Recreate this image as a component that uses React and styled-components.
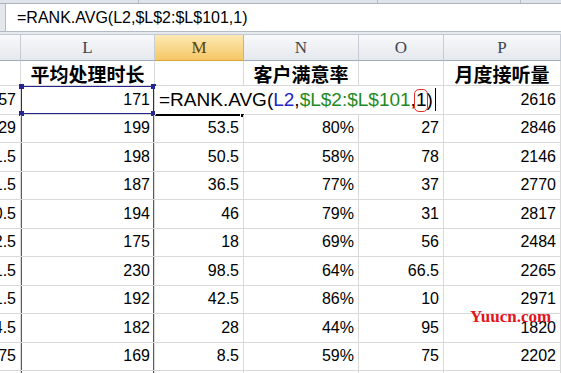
import React from 'react';
import styled, { createGlobalStyle, css } from 'styled-components';

const GlobalStyle = createGlobalStyle`
  html, body {
    margin: 0;
    padding: 0;
    background: #fff;
  }
  body {
    font-family: "Liberation Sans", Arial, sans-serif;
  }
`;

const columns = ['K', 'L', 'M', 'N', 'O', 'P'];

const rows = [
  ['29', '199', '53.5', '80%', '27', '2846'],
  ['1.5', '198', '50.5', '58%', '78', '2146'],
  ['1.5', '187', '36.5', '77%', '37', '2770'],
  ['0.5', '194', '46', '79%', '31', '2817'],
  ['2.5', '175', '18', '69%', '56', '2484'],
  ['1.5', '230', '98.5', '64%', '66.5', '2265'],
  ['1.5', '192', '42.5', '86%', '10', '2971'],
  ['4.5', '182', '28', '44%', '95', '1820'],
  ['75', '169', '8.5', '59%', '75', '2202'],
  ['', '', '', '', '', ''],
];

const gridLine = '#d9d9d9';
const rangeGreen = '#2f7a33';
const refBlue = '#25258f';

const Sheet = styled.div`
  position: relative;
  display: flex;
  flex-direction: column;
  width: 561px;
  height: 373px;
  overflow: hidden;
  background: #fff;
  & > * {
    flex-shrink: 0;
  }
`;

const TopStrip = styled.div`
  display: flex;
  height: 3px;
  background: #dfe4ea;
  border-bottom: 1px solid #aab3be;
`;

const StripSegment = styled.div`
  flex: none;
  width: ${(p) => p.$w}px;
  border-right: 1px solid #b6bec9;
`;

const FormulaRow = styled.div`
  display: flex;
  height: 27px;
  border-bottom: 1px solid #b3bac4;
`;

const FormulaGutter = styled.div`
  width: 5px;
  background: #e4e8ed;
  border-right: 1px solid #b3bac4;
`;

const FormulaInput = styled.div`
  flex: 1;
  display: flex;
  align-items: center;
  padding-left: 11px;
  font-size: 16px;
  color: #000;
  white-space: nowrap;
`;

const Gap = styled.div`
  height: 2px;
  background: #e6eaef;
  border-bottom: 1px solid #c2c9d2;
`;

const Grid = styled.div`
  display: grid;
  grid-template-columns: 21px 134px 89px 115px 85px 117px;
  grid-template-rows: 26px 25px repeat(11, 28.5px);
`;

const ColHeader = styled.div`
  display: flex;
  align-items: center;
  justify-content: center;
  font-family: "Liberation Serif", serif;
  font-size: 17px;
  color: ${(p) => (p.$active ? '#5a4104' : '#3d4552')};
  background: ${(p) =>
    p.$active ? 'linear-gradient(#fde9b4, #f5c766)' : 'linear-gradient(#f8f9fb, #e5e8ed)'};
  border-right: 1px solid ${(p) => (p.$active ? '#e0b24e' : '#c6ccd5')};
  border-bottom: 1px solid ${(p) => (p.$active ? '#dba23a' : '#9eabba')};
`;

const Cell = styled.div`
  position: relative;
  display: flex;
  align-items: center;
  justify-content: ${(p) => (p.$center ? 'center' : 'flex-end')};
  padding: 0 4px;
  overflow: hidden;
  white-space: nowrap;
  font-size: 16px;
  color: #000;
  border-right: 1px solid ${gridLine};
  border-bottom: 1px solid ${gridLine};
  ${(p) =>
    p.$range &&
    css`
      box-shadow: inset 1px 0 0 ${rangeGreen}, inset -1px 0 0 ${rangeGreen};
    `}
  ${(p) =>
    p.$ref &&
    css`
      overflow: visible;
      box-shadow: inset 0 0 0 1px ${refBlue};
    `}
`;

const HeadText = styled.span`
  font-family: "Noto Sans CJK SC", sans-serif;
  font-weight: 700;
  font-size: 19px;
  line-height: 1;
`;

const Corner = styled.span`
  position: absolute;
  width: 5px;
  height: 5px;
  background: ${refBlue};
  ${(p) => (p.$top ? 'top: -2px;' : 'bottom: -2px;')}
  ${(p) => (p.$left ? 'left: -2px;' : 'right: -2px;')}
`;

const EditCell = styled.div`
  position: relative;
  grid-column: span 3;
  display: flex;
  align-items: center;
  padding-left: 4px;
  background: #fff;
  font-size: 19px;
  color: #000;
  white-space: nowrap;
  border-right: 1px solid ${gridLine};
  border-bottom: 1px solid ${gridLine};
`;

const Token = styled.span`
  color: ${(p) => p.$color || '#000'};
`;

const Boxed = styled.span`
  position: relative;
  &::after {
    content: '';
    position: absolute;
    left: -2px;
    right: -2px;
    top: 0px;
    bottom: -1px;
    border: 1.5px solid #e0302a;
    border-radius: 5px;
  }
`;

const Caret = styled.span`
  display: inline-block;
  width: 1px;
  height: 23px;
  margin-left: 2px;
  background: #000;
`;

const ActiveEdge = styled.span`
  position: absolute;
  left: 1px;
  bottom: -2px;
  width: 86px;
  height: 2px;
  background: #000;
`;

const FillHandle = styled.span`
  position: absolute;
  left: 85px;
  bottom: -4px;
  width: 5px;
  height: 5px;
  background: #000;
  border: 1px solid #fff;
  box-sizing: border-box;
`;

const Watermark = styled.div`
  position: absolute;
  left: 470px;
  top: 308px;
  font-family: "Liberation Serif", "DejaVu Serif", serif;
  font-weight: 700;
  font-size: 17px;
  line-height: 1;
  color: #e3141c;
`;

const Formula = () => (
  <>
    <Token>=RANK.AVG(</Token>
    <Token $color="#2424c8">L2</Token>
    <Token>,</Token>
    <Token $color="#1f8a24">$L$2:$L$101</Token>
    <Token>,</Token>
    <Boxed>1</Boxed>
    <Token>)</Token>
    <Caret />
  </>
);

const App = () => (
  <>
    <GlobalStyle />
    <Sheet>
      <TopStrip>
        <StripSegment $w={138} />
        <StripSegment $w={238} />
        <StripSegment $w={142} />
      </TopStrip>
      <FormulaRow>
        <FormulaGutter />
        <FormulaInput>=RANK.AVG(L2,$L$2:$L$101,1)</FormulaInput>
      </FormulaRow>
      <Gap />
      <Grid>
        {columns.map((c) => (
          <ColHeader key={c} $active={c === 'M'}>
            {c === 'K' ? '' : c}
          </ColHeader>
        ))}

        <Cell />
        <Cell $center>
          <HeadText>平均处理时长</HeadText>
        </Cell>
        <Cell />
        <Cell $center>
          <HeadText>客户满意率</HeadText>
        </Cell>
        <Cell />
        <Cell $center>
          <HeadText>月度接听量</HeadText>
        </Cell>

        <Cell>57</Cell>
        <Cell $ref>
          171
          <Corner $top $left />
          <Corner $top />
          <Corner $left />
          <Corner />
        </Cell>
        <EditCell>
          <Formula />
          <ActiveEdge />
          <FillHandle />
        </EditCell>
        <Cell>2616</Cell>

        {rows.map((r, i) =>
          r.map((v, j) => (
            <Cell key={`${i}-${j}`} $range={j === 1}>
              {v}
            </Cell>
          ))
        )}
      </Grid>
      <Watermark>Yuucn.com</Watermark>
    </Sheet>
  </>
);

export default App;
